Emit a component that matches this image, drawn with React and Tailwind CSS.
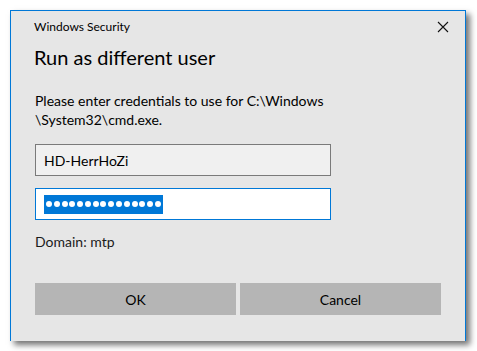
export default function App() {
  const dots = Array.from({ length: 15 });
  return (
    <div className="w-[477px] h-[351px] bg-white pt-[10px] pl-[10px] font-['Lato',_'Roboto',_sans-serif]">
      <div className="w-[456px] h-[331px] border border-b-0 border-[#0078d7] bg-[#e6e6e6] shadow-[4px_4px_6px_rgba(0,0,0,0.55)] flex flex-col text-black">
        {/* Title bar */}
        <div className="h-[32px] flex items-center justify-between pl-[23px] pr-[16px]">
          <span className="text-[12px]">Windows Security</span>
          <svg width="12" height="12" viewBox="0 0 12 12" className="text-[#111]">
            <path d="M1 1 L11 11 M11 1 L1 11" stroke="currentColor" strokeWidth="1.1" />
          </svg>
        </div>

        <div className="pl-[24px] flex flex-col">
          <h1 className="text-[20px] leading-[28px] -ml-[1px]">Run as different user</h1>

          <p className="mt-[20px] text-[14px] leading-[19px]">
            Please enter credentials to use for C:\Windows
            <br />
            \System32\cmd.exe.
          </p>

          <div className="mt-[15px] w-[296px] h-[32px] border border-[#7a7a7a] bg-[#f0f0f0] flex items-center pl-[8px] text-[14px]">
            HD-HerrHoZi
          </div>

          <div className="mt-[12px] w-[296px] h-[32px] border border-[#0078d7] bg-white flex items-center pl-[8px]">
            <div className="h-[19px] w-[119px] bg-[#0078d7] flex items-center justify-between px-[2px]">
              {dots.map((_, i) => (
                <span key={i} className="w-[6px] h-[6px] rounded-full bg-white" />
              ))}
            </div>
          </div>

          <p className="mt-[12px] text-[14px] leading-[19px] text-[#1a1a1a]">Domain: mtp</p>

          <div className="mt-[32px] flex gap-[4px]">
            <button className="w-[201px] h-[32px] bg-[#b5b5b5] text-[14px]">OK</button>
            <button className="w-[201px] h-[32px] bg-[#b5b5b5] text-[14px]">Cancel</button>
          </div>
        </div>
      </div>
    </div>
  );
}
